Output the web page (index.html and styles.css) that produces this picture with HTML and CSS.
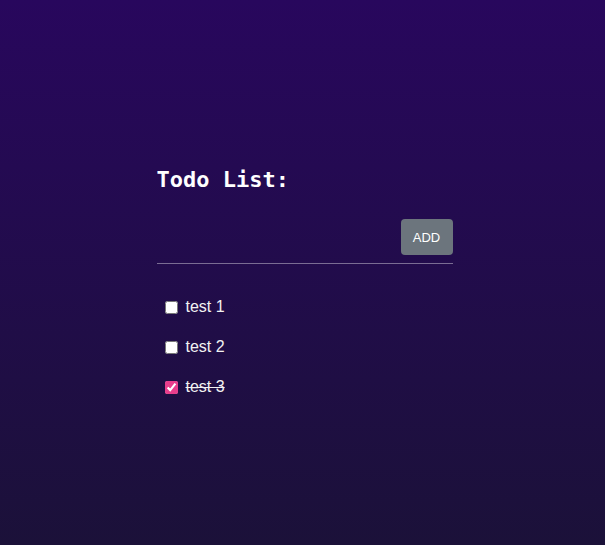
FILE: index.html
```html
<!DOCTYPE html>
<html>
<head>
<meta charset="utf-8">
<link rel="stylesheet" href="styles.css">
</head>
<body>
<div class="app">
  <h2 class="title">Todo List:</h2>
  <form class="add-form">
    <input class="add-input" type="text">
    <button class="add-btn" type="button">ADD</button>
  </form>
  <ul class="todos">
    <li class="todo"><input type="checkbox" class="check"><span class="label">test 1</span></li>
    <li class="todo"><input type="checkbox" class="check"><span class="label">test 2</span></li>
    <li class="todo done"><input type="checkbox" class="check" checked><span class="label">test 3</span></li>
  </ul>
</div>
</body>
</html>
```
FILE: styles.css
```css
html, body {
  margin: 0;
  height: 100%;
}
body {
  background: linear-gradient(to bottom, #28075d 0%, #1b1139 100%);
  font-family: "Liberation Sans", Arial, sans-serif;
  color: #ffffff;
}
.app {
  width: 296px;
  margin: 0 auto;
  padding: 166px 0 0 4px;
  box-sizing: content-box;
}
.title {
  font-family: "DejaVu Sans Mono", monospace;
  font-weight: bold;
  font-size: 22px;
  line-height: 28px;
  margin: 0 0 25px 0;
  color: #fff;
}
.add-form {
  display: flex;
  align-items: center;
  justify-content: space-between;
  padding-bottom: 8px;
  border-bottom: 1px solid rgba(255,255,255,0.4);
  margin: 0;
}
.add-input {
  flex: 1;
  background: transparent;
  border: none;
  outline: none;
  color: #fff;
  height: 30px;
}
.add-btn {
  width: 52px;
  height: 36px;
  background: #6c757d;
  color: #fff;
  border: none;
  border-radius: 4px;
  font-family: "Liberation Sans", Arial, sans-serif;
  font-size: 13px;
  padding: 0;
}
.todos {
  list-style: none;
  margin: 0;
  padding: 23px 0 0 8px;
}
.todo {
  display: flex;
  align-items: center;
  height: 40px;
  font-size: 16px;
  color: #f2f2f2;
}
.check {
  width: 13px;
  height: 13px;
  margin: 0 8px 0 0;
  accent-color: #e83e8c;
}
.done .label {
  text-decoration: line-through;
}
```
